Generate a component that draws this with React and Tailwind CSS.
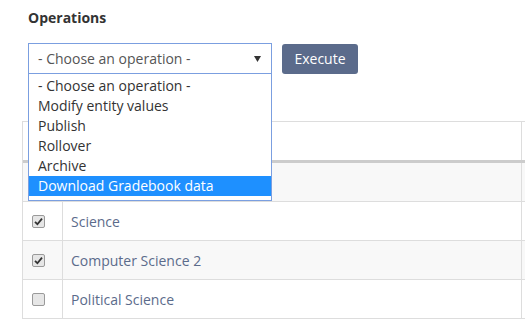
import React from 'react';

const rows = [
  { name: '', checked: false, shade: true },
  { name: 'Science', checked: true, shade: false },
  { name: 'Computer Science 2', checked: true, shade: true },
  { name: 'Political Science', checked: false, shade: false },
];

const options = [
  '- Choose an operation -',
  'Modify entity values',
  'Publish',
  'Rollover',
  'Archive',
  'Download Gradebook data',
];

function Check({ checked }) {
  return (
    <span className="w-[13px] h-[13px] rounded-[2px] border border-[#9a9a9a] bg-[#e6e6e6] flex items-center justify-center">
      {checked && (
        <svg width="9" height="9" viewBox="0 0 9 9">
          <path d="M1 4.8 L3.4 7.2 L8 1.6" stroke="#333" strokeWidth="1.8" fill="none" />
        </svg>
      )}
    </span>
  );
}

export default function App() {
  return (
    <div className="w-[525px] h-[321px] overflow-hidden bg-white relative font-['Open_Sans',sans-serif]">
      <div className="pl-[22px] pt-[8px]">
        <div className="pl-[6px]">
          <h4 className="text-[14px] font-bold text-[#333] leading-[19px]">Operations</h4>

          {/* operation picker */}
          <div className="mt-[16px] flex items-center gap-[10px] relative">
            <div className="w-[244px] h-[31px] border border-[#7b9fe0] bg-white flex items-center justify-between pl-[9px] pr-[10px]">
              <span className="text-[14px] text-[#555]">- Choose an operation -</span>
              <svg width="7" height="6" viewBox="0 0 7 6">
                <path d="M0 0 H7 L3.5 6 Z" fill="#333" />
              </svg>
            </div>
            <button className="w-[76px] h-[30px] rounded-[3px] bg-[#5b6b8b] text-white text-[14px] leading-none">
              Execute
            </button>

            <div className="absolute left-0 top-[31px] w-[244px] z-10 bg-white border border-t-0 border-[#7b9fe0] pt-[2px] pb-[4px]">
              {options.map((o, i) => (
                <div
                  key={o}
                  className={
                    i === options.length - 1
                      ? 'h-[20px] pl-[9px] text-[14px] leading-[20px] bg-[#1e90ff] text-white'
                      : 'h-[20px] pl-[9px] text-[14px] leading-[20px] text-[#333]'
                  }
                >
                  {o}
                </div>
              ))}
            </div>
          </div>
        </div>

        {/* entity table */}
        <div className="mt-[47px] w-[620px] border-t border-l border-[#ddd]">
          <div className="flex h-[41px] border-b-[3px] border-[#ccc]">
            <div className="w-[40px] border-r border-[#ddd]" />
            <div className="w-[459px] border-r border-[#ddd]" />
            <div className="flex-1" />
          </div>
          {rows.map((r, i) => (
            <div key={i} className={`flex h-[39px] border-b border-[#ddd] ${r.shade ? 'bg-[#f8f8f8]' : 'bg-white'}`}>
              <div className="w-[40px] border-r border-[#ddd] flex items-center pl-[9px]">
                {r.name && <Check checked={r.checked} />}
              </div>
              <div className="w-[459px] border-r border-[#ddd] flex items-center pl-[8px] text-[14px] text-[#5b6b8b]">
                {r.name}
              </div>
              <div className="flex-1" />
            </div>
          ))}
        </div>
      </div>
    </div>
  );
}
